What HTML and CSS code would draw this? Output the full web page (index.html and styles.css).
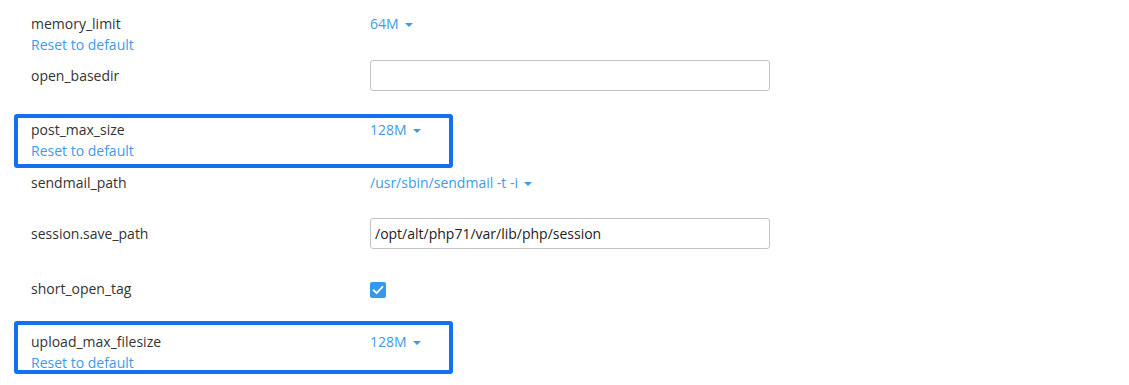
FILE: index.html
```html
<!doctype HTML>
<html>

<head>
  <title>PHP Options</title>
  <link rel="stylesheet" href="styles.css">
</head>

<body>
  <div class="settings">
    <div class="row two-line">
      <div>
        <div class="label">memory_limit</div>
        <a class="reset" href="#">Reset to default</a>
      </div>
      <div><span class="dropdown">64M</span></div>
    </div>

    <div class="row input-row first-input">
      <div class="label">open_basedir</div>
      <input type="text" class="text-input" value="">
    </div>

    <div class="row two-line marked first-mark">
      <div>
        <div class="label">post_max_size</div>
        <a class="reset" href="#">Reset to default</a>
      </div>
      <div><span class="dropdown">128M</span></div>
    </div>

    <div class="row single">
      <div class="label">sendmail_path</div>
      <div><span class="dropdown">/usr/sbin/sendmail -t -i</span></div>
    </div>

    <div class="row input-row second-input">
      <div class="label">session.save_path</div>
      <input type="text" class="text-input" value="/opt/alt/php71/var/lib/php/session">
    </div>

    <div class="row single check-row">
      <div class="label">short_open_tag</div>
      <div><span class="checkbox"><svg width="16" height="16" viewBox="0 0 16 16"><path d="M3.5 8.2 L6.6 11.2 L12.5 4.8" fill="none" stroke="#fff" stroke-width="1.8" stroke-linecap="round" stroke-linejoin="round"/></svg></span></div>
    </div>

    <div class="row two-line marked second-mark">
      <div>
        <div class="label">upload_max_filesize</div>
        <a class="reset" href="#">Reset to default</a>
      </div>
      <div><span class="dropdown">128M</span></div>
    </div>
  </div>
</body>

</html>
```

FILE: styles.css
```css
*,
*::before,
*::after {
  box-sizing: border-box;
}

html {
  font-family: "Open Sans", "Noto Sans", Arial, sans-serif;
  font-size: 14px;
}

body {
  margin: 0;
  background: #fff;
  color: #333;
}

.settings {
  display: flex;
  flex-direction: column;
  align-items: flex-start;
  padding: 13px 0 0 14px;
}

.row {
  display: grid;
  grid-template-columns: 339px 400px;
  padding-left: 17px;
  line-height: 21px;
}

.label {
  color: #333;
}

.reset {
  display: block;
  color: #3d9be9;
  text-decoration: none;
}

.dropdown {
  color: #3d9be9;
  cursor: pointer;
}

.dropdown::after {
  content: "";
  display: inline-block;
  margin-left: 6px;
  vertical-align: middle;
  border-left: 4px solid transparent;
  border-right: 4px solid transparent;
  border-top: 4px solid #3d9be9;
}

.input-row {
  align-items: center;
}

.text-input {
  height: 31px;
  width: 400px;
  border: 1px solid #c4c4c4;
  border-radius: 3px;
  padding: 0 4px;
  font-family: inherit;
  font-size: 14px;
  color: #222;
}

.first-input {
  margin-top: 5px;
}

.second-input {
  margin-top: 25px;
}

.single {
  margin-top: 4px;
}

.check-row {
  margin-top: 29px;
  align-items: center;
}

.checkbox {
  display: flex;
  width: 16px;
  height: 16px;
  border-radius: 2px;
  background: #3399ee;
  margin-top: 2px;
}

.marked {
  border: 4px solid #1570f0;
  border-radius: 3px;
  grid-template-columns: 339px 69px;
  padding-left: 13px;
  width: 439px;
}

.first-mark {
  margin-top: 23px;
  padding-top: 1px;
  height: 54px;
}

.second-mark {
  margin-top: 22px;
  padding-top: 6px;
  height: 53px;
}
```
